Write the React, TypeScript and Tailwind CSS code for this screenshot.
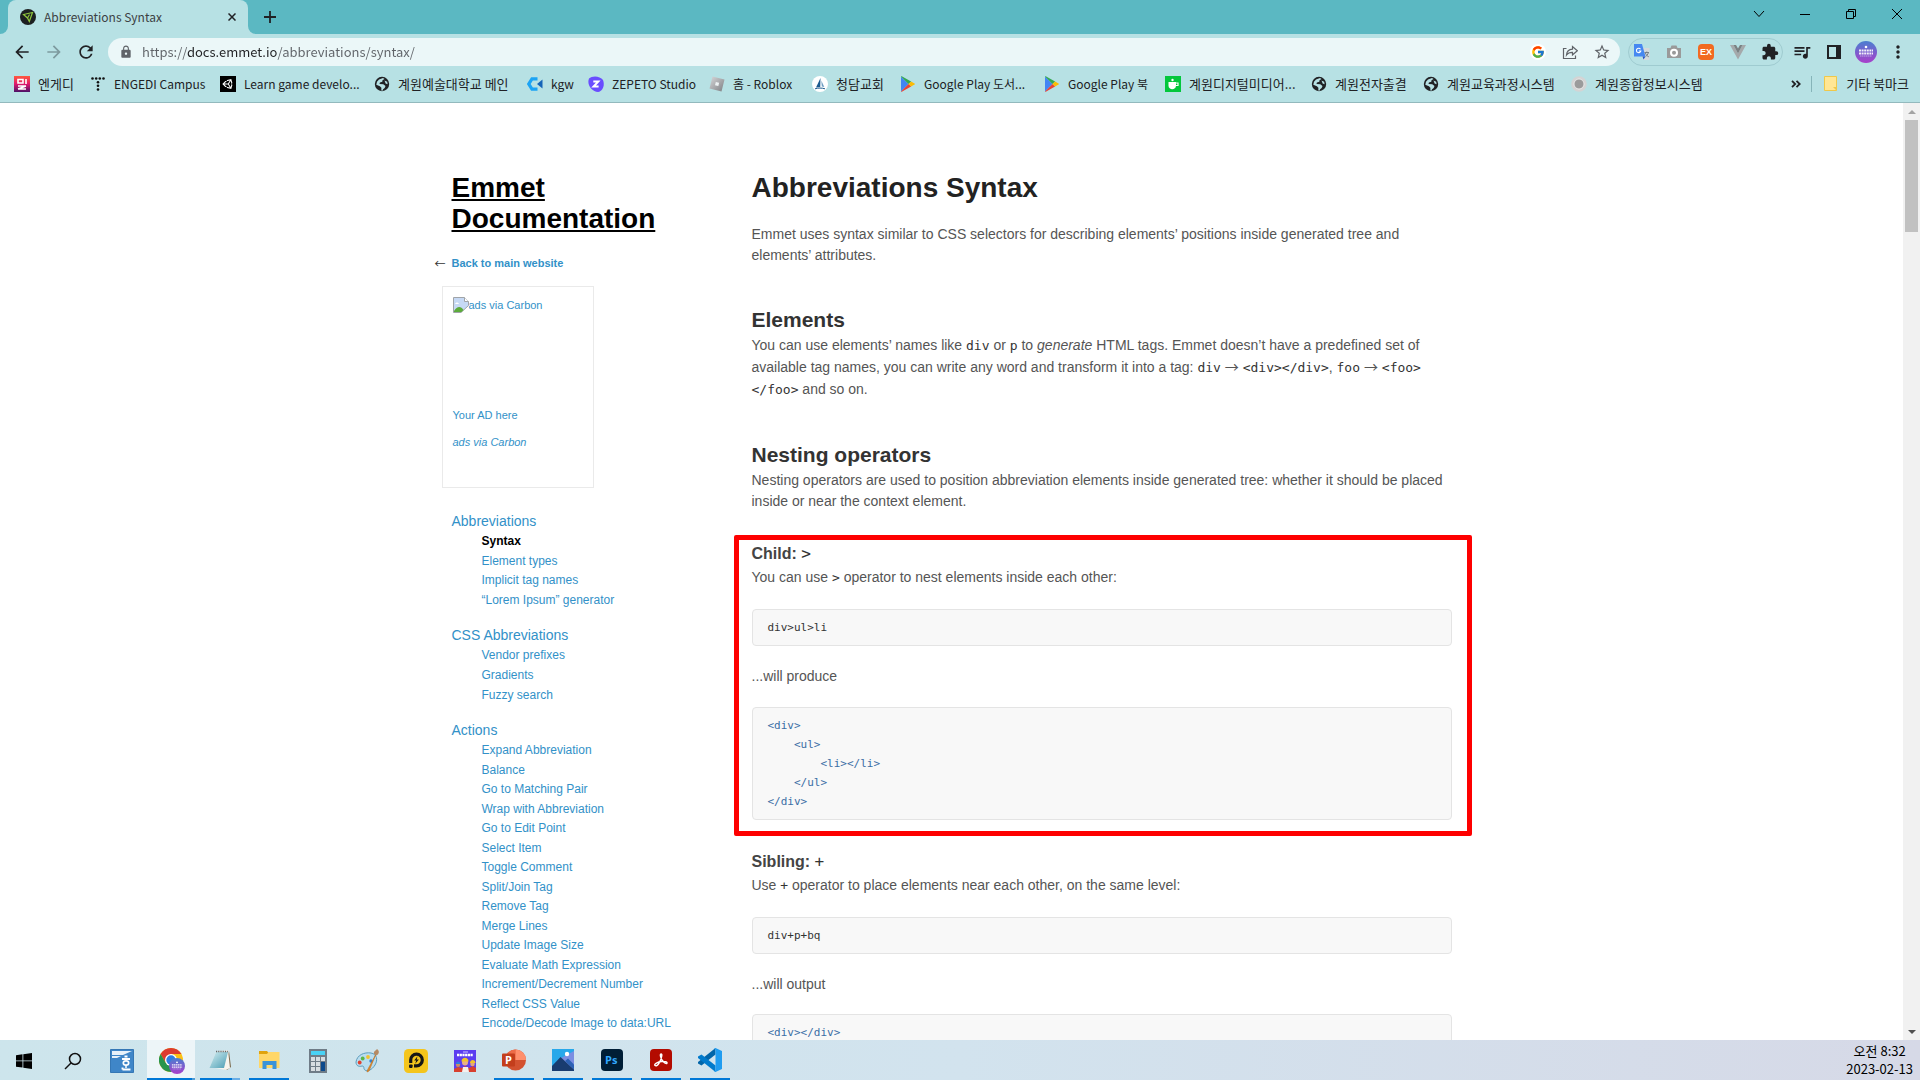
import type { ReactNode } from "react";
import { FcGoogle } from "react-icons/fc";
import { FaUnity } from "react-icons/fa";
import {
  MdArrowBack,
  MdArrowForward,
  MdExtension,
  MdLock,
  MdMoreVert,
  MdQueueMusic,
  MdRefresh,
  MdStarOutline,
} from "react-icons/md";

type Bookmark = {
  label: string;
  icon: ReactNode;
  width: string;
};

type NavGroup = {
  title: string;
  height: string;
  items: string[];
};

type TaskItem = {
  label: string;
  icon: ReactNode;
  state?: "open" | "stacked" | "active";
};

function Globe() {
  return (
    <svg viewBox="0 0 16 16" className="size-4">
      <circle cx="8" cy="8" r="7.2" fill="#202124" />
      <path d="M5 3.5l4-1.6 1.5 1.2-2 1.1-.2 1.6-2.4.6-.4 1.6 3.8.3 2.2 1.8-.8 2-1.6 1.2-.6 1.5-1.2-.3.1-2.7-1.5-1.6L2.3 8.800 3 5.700z" fill="#b7e1e4" />
      <path d="M10.5 4.500l2.700 1.200.4 2.500-2-.8z" fill="#b7e1e4" />
    </svg>
  );
}

function PlayLogo() {
  return (
    <svg viewBox="0 0 16 16" className="size-4">
      <path d="M1 .6v14.800L8.500 8z" fill="#4285f4" />
      <path d="M1 .6L8.500 8l2.600-2.500L2.200.4C1.700.1 1.200.2 1 .6z" fill="#34a853" />
      <path d="M1 15.400L8.500 8l2.600 2.500-8.900 5.100c-.5.3-1 .2-1.200-.2z" fill="#ea4335" />
      <path d="M11.100 5.500L8.500 8l2.600 2.500 3.400-1.900c.6-.4.6-.9 0-1.200z" fill="#fbbc04" />
    </svg>
  );
}

function ProfileBadge({ className }: { className: string }) {
  return (
    <svg viewBox="0 0 22 22" className={className}>
      <defs>
        <linearGradient id="badge" x1="0" y1="0" x2="0" y2="1">
          <stop offset="0" stopColor="#4a7fd0" />
          <stop offset="1" stopColor="#a93fcb" />
        </linearGradient>
      </defs>
      <circle cx="11" cy="11" r="11" fill="url(#badge)" />
      <circle cx="11" cy="6" r="1.3" fill="#fff" />
      <path d="M4 9.500h14M4 12.500h14" stroke="#fff" strokeWidth="1.800" strokeDasharray="2 .6" opacity=".9" />
      <path d="M5 15h12" stroke="#fff" strokeWidth=".8" strokeDasharray="1.500 .5" opacity=".6" />
    </svg>
  );
}

const bookmarks: Bookmark[] = [
  {
    label: "엔게디",
    width: "w-[60px] text-[13px]",
    icon: (
      <svg viewBox="0 0 16 16" className="size-4">
        <defs>
          <linearGradient id="engedi" x1="0" y1="0" x2="0" y2="1">
            <stop offset="0" stopColor="#ff5a3c" />
            <stop offset=".5" stopColor="#e0176c" />
            <stop offset="1" stopColor="#4b1268" />
          </linearGradient>
        </defs>
        <path d="M0 0h16v16H0z" fill="url(#engedi)" />
        <path d="M4 3.500h5v3.500H4zM12 3v5M4 10h8M4 13h8M4 13l8-3" fill="none" stroke="#fff" strokeWidth="1.600" />
      </svg>
    ),
  },
  {
    label: "ENGEDI Campus",
    width: "w-[114px] text-xs",
    icon: (
      <svg viewBox="0 0 16 16" className="size-4" fill="#111">
        <circle cx="2.500" cy="2.500" r="1.300" />
        <circle cx="6.200" cy="2.500" r="1.300" />
        <circle cx="9.800" cy="2.500" r="1.300" />
        <circle cx="13.500" cy="2.500" r="1.300" />
        <circle cx="8" cy="6.200" r="1.300" />
        <circle cx="8" cy="9.800" r="1.300" />
        <circle cx="8" cy="13.500" r="1.300" />
      </svg>
    ),
  },
  {
    label: "Learn game develo...",
    width: "w-[138px] text-xs",
    icon: (
      <span className="flex size-4 items-center justify-center bg-black">
        <FaUnity className="size-3 text-white" />
      </span>
    ),
  },
  { label: "계원예술대학교 메인", width: "w-[137px] text-[13px]", icon: <Globe /> },
  {
    label: "kgw",
    width: "w-[45px] text-xs",
    icon: (
      <svg viewBox="0 0 16 16" className="size-4" fill="none">
        <path d="M10.500 2.800H5L1.800 8 5 13.200h5.500" stroke="#1ca4f4" strokeWidth="3.200" />
        <path d="M15.500 3.500v9L10 8z" fill="#1464b8" />
      </svg>
    ),
  },
  {
    label: "ZEPETO Studio",
    width: "w-[105px] text-xs",
    icon: (
      <svg viewBox="0 0 16 16" className="size-4">
        <path d="M1 2.500C4-.6 12-.4 15 4c2 5 0 11-5 12C4 15.500-1.500 9 1 2.500z" fill="#6a4dff" />
        <path d="M5.300 5.500h5L5.600 10.500h5" fill="none" stroke="#fff" strokeWidth="2" />
      </svg>
    ),
  },
  {
    label: "홈 - Roblox",
    width: "w-[87px] text-xs",
    icon: (
      <svg viewBox="0 0 16 16" className="size-4">
        <defs>
          <linearGradient id="roblox" x1="0" y1="0" x2="1" y2="1">
            <stop offset="0" stopColor="#d8d8da" />
            <stop offset="1" stopColor="#7d7f83" />
          </linearGradient>
        </defs>
        <path d="M3.500.5l12 3-3 12-12-3z" fill="url(#roblox)" />
        <path d="M6.800 5.900l3.300.8-.8 3.300-3.300-.8z" fill="#eef3f4" />
      </svg>
    ),
  },
  {
    label: "청담교회",
    width: "w-[72px] text-[13px]",
    icon: (
      <svg viewBox="0 0 16 16" className="size-4">
        <circle cx="8" cy="8" r="8" fill="#fff" />
        <path d="M8.500 2L8.200 11 4 11.500z" fill="#1d5b8f" />
        <path d="M9.300 4.500l3 6.500-2.500-.5z" fill="#6f9ec2" />
        <path d="M3 12.800c3-1 7-1 10 0" fill="none" stroke="#1d5b8f" />
      </svg>
    ),
  },
  { label: "Google Play 도서...", width: "w-[128px] text-xs", icon: <PlayLogo /> },
  { label: "Google Play 북", width: "w-[105px] text-xs", icon: <PlayLogo /> },
  {
    label: "계원디지털미디어...",
    width: "w-[130px] text-[13px]",
    icon: (
      <svg viewBox="0 0 16 16" className="size-4">
        <path d="M0 0h16v16H0z" fill="#03c73c" />
        <path d="M3.500 6h7.500v3.500c0 5-7.500 5-7.500 0z" fill="#fff" />
        <path d="M11 7h2v2.500h-2.300" fill="none" stroke="#fff" strokeWidth="1.200" />
        <circle cx="7.500" cy="4" r="1.200" fill="#fff" />
      </svg>
    ),
  },
  { label: "계원전자출결", width: "w-[96px] text-[13px]", icon: <Globe /> },
  { label: "계원교육과정시스템", width: "w-[132px] text-[13px]", icon: <Globe /> },
  {
    label: "계원종합정보시스템",
    width: "w-[132px] text-[13px]",
    icon: (
      <svg viewBox="0 0 16 16" className="size-4">
        <circle cx="8" cy="8" r="7.800" fill="#d4d4d4" />
        <circle cx="8" cy="8" r="5" fill="#9b9b9b" stroke="#f1f1f1" strokeWidth=".8" />
      </svg>
    ),
  },
];

const navGroups: NavGroup[] = [
  {
    title: "Abbreviations",
    height: "min-h-[78px]",
    items: ["Syntax", "Element types", "Implicit tag names", "“Lorem Ipsum” generator"],
  },
  {
    title: "CSS Abbreviations",
    height: "min-h-[59px]",
    items: ["Vendor prefixes", "Gradients", "Fuzzy search"],
  },
  {
    title: "Actions",
    height: "min-h-[292px]",
    items: [
      "Expand Abbreviation",
      "Balance",
      "Go to Matching Pair",
      "Wrap with Abbreviation",
      "Go to Edit Point",
      "Select Item",
      "Toggle Comment",
      "Split/Join Tag",
      "Remove Tag",
      "Merge Lines",
      "Update Image Size",
      "Evaluate Math Expression",
      "Increment/Decrement Number",
      "Reflect CSS Value",
      "Encode/Decode Image to data:URL",
    ],
  },
];

const taskItems: TaskItem[] = [
  {
    label: "Start",
    icon: (
      <svg viewBox="0 0 16 16" className="size-4" fill="#000">
        <path d="M0 2.200L6.500 1.300v6.200H0zM7.300 1.200L16 0v7.500H7.300zM0 8.300h6.500v6.300L0 13.700zM7.300 8.300H16V16l-8.700-1.300z" />
      </svg>
    ),
  },
  {
    label: "Search",
    icon: (
      <svg viewBox="0 0 18 18" className="size-[18px]" fill="none" stroke="#111" strokeWidth="1.500">
        <circle cx="11" cy="7" r="5.500" />
        <path d="M7 11l-6 6" />
      </svg>
    ),
  },
  {
    label: "Hangul",
    icon: (
      <svg viewBox="0 0 24 24" className="size-6">
        <path d="M.5.500h23v23H.5z" fill="#3f86c8" stroke="#3577b5" />
        <path d="M2 2h20L13 6H2zM2 7h9L7 9H2z" fill="#e8f2fa" />
        <path d="M14.500 7.500h3M12 10h8M12.500 20.500v-2M12.500 20.500h8" stroke="#fff" strokeWidth="1.900" />
        <ellipse cx="16" cy="14" rx="2.700" ry="2.100" fill="none" stroke="#fff" strokeWidth="1.700" />
        <path d="M16 16v3" stroke="#fff" strokeWidth="1.500" />
      </svg>
    ),
  },
  {
    label: "Chrome",
    state: "active",
    icon: (
      <span className="relative flex size-6">
        <svg viewBox="0 0 24 24" className="size-6">
          <circle cx="12" cy="12" r="12" fill="#fbc116" />
          <path d="M12 0A12 12 0 0 0 1.600 6l5.200 9L12 6h10.400A12 12 0 0 0 12 0z" fill="#dc3b2f" />
          <path d="M1.600 6A12 12 0 0 0 12 24l5.200-9H6.800z" fill="#27944c" />
          <circle cx="12" cy="12" r="6" fill="#fff" />
          <circle cx="12" cy="12" r="4.700" fill="#2f7de1" />
        </svg>
        <ProfileBadge className="absolute -right-[2px] -bottom-[2px] size-4" />
      </span>
    ),
  },
  {
    label: "Notepad",
    state: "stacked",
    icon: (
      <svg viewBox="0 0 24 24" className="size-6">
        <defs>
          <linearGradient id="pad" x1="0" y1="0" x2="1" y2="1">
            <stop offset="0" stopColor="#d3eef2" />
            <stop offset="1" stopColor="#4b9db3" />
          </linearGradient>
        </defs>
        <path d="M21 3l2 16-4 3-3-1z" fill="#7b6a4e" />
        <path d="M8 4l12-2 2 18-4 2-16-3z" fill="#f6f5ee" />
        <path d="M8 4h12l-4 16H1.500z" fill="url(#pad)" />
        <path d="M8 3.500h12.500" stroke="#666" strokeWidth="1.400" strokeDasharray="1 .8" />
      </svg>
    ),
  },
  {
    label: "File Explorer",
    state: "open",
    icon: (
      <svg viewBox="0 0 24 24" className="size-6">
        <path d="M2 3h8l2 2.500h9.500V9H2z" fill="#e0a30c" />
        <path d="M2 6h8l1.500-2h11v16H2z" fill="#ffd768" />
        <path d="M5.500 21v-8h14v8h-4v-4h-6v4z" fill="#3a93d8" />
      </svg>
    ),
  },
  {
    label: "Calculator",
    icon: (
      <svg viewBox="0 0 24 24" className="size-6">
        <path d="M3 0h18v24H3z" fill="#6f7c87" />
        <path d="M5 2h14v4H5z" fill="#49d2f5" />
        <path d="M5 8h4v4H5zM10 8h4v4h-4zM15 8h4v4h-4zM5 13h4v4H5zM10 13h4v4h-4zM5 18h4v4H5zM10 18h4v4h-4z" fill="#d7dde1" />
        <path d="M15 13h4v9h-4z" fill="#0c4a8c" />
      </svg>
    ),
  },
  {
    label: "Paint",
    icon: (
      <svg viewBox="0 0 24 24" className="size-6">
        <path d="M1 13C2 6 9 3 16 4c6 1 7 7 4 12-3 5-8 7-10 5-2-1 0-4-3-4-3 1-6 0-6-4z" fill="#b9ddef" stroke="#5d9dbd" />
        <circle cx="4.700" cy="13.500" r="1.900" fill="#e0402f" />
        <circle cx="7.700" cy="9.500" r="1.900" fill="#5bb548" />
        <circle cx="13" cy="8" r="1.900" fill="#f2c230" />
        <circle cx="16" cy="12" r="1.700" fill="#3680d0" />
        <path d="M21 5l-7 17-2 1 .5-2z" fill="#e08a2c" stroke="#c1701c" strokeWidth=".6" />
        <path d="M19 5c-1-3 2-3 3-5 3 2 2 5-.5 6.500z" fill="#b58a64" />
      </svg>
    ),
  },
  {
    label: "PotPlayer",
    icon: (
      <svg viewBox="0 0 24 24" className="size-6">
        <rect width="24" height="24" rx="4.500" fill="#f4c51c" />
        <path d="M6.700 14V11a5.800 5.800 0 1 1 5.800 5.800H10" fill="none" stroke="#161616" strokeWidth="3.200" />
        <rect x="5" y="15.500" width="3.600" height="3.400" rx=".8" fill="#161616" />
        <path d="M13.500 7.200l-3.300 4.300h2l-1 3.300 3.700-4.400h-2.200z" fill="#161616" />
      </svg>
    ),
  },
  {
    label: "Game",
    icon: (
      <svg viewBox="0 0 24 24" className="size-6">
        <path d="M1 1h22v22H1z" fill="#5b3df0" />
        <path d="M4 6h16" stroke="#fff" strokeWidth="2.400" strokeDasharray="2.200 .5" />
        <path d="M10 3h5" stroke="#cfc6ff" />
        <path d="M1 23v-3l4-2 4 1 3-2 4 2 4-2 3 2v4z" fill="#d8402f" />
        <path d="M9 23l1-5h5l1 5z" fill="#f6f1ee" />
        <circle cx="12" cy="13.500" r="3" fill="#e9b088" />
        <circle cx="5" cy="15.800" r="2.200" fill="#c98a65" />
        <circle cx="19.500" cy="15" r="2.300" fill="#e3a67e" />
        <path d="M8.500 12.500c0-5 7-5 7 0zM17 14c0-4 5.500-4 5.500 0z" fill="#f3c32a" />
        <path d="M2.800 15c0-3.500 4.500-3.500 4.500 0z" fill="#2f7be0" />
      </svg>
    ),
  },
  {
    label: "PowerPoint",
    state: "open",
    icon: (
      <svg viewBox="0 0 24 24" className="size-6">
        <circle cx="13.500" cy="12" r="10.500" fill="#d35230" />
        <path d="M13.500 1.500A10.500 10.500 0 0 0 3 12h10.500z" fill="#ed6c47" />
        <path d="M13.500 1.500A10.500 10.500 0 0 1 24 12H13.500z" fill="#ff8f6b" />
        <rect x="0" y="5.500" width="13" height="13" rx="1" fill="#c43e1c" />
        <text x="3" y="16" fill="#fff" className="font-['Open_Sans'] text-[11px] font-bold">P</text>
      </svg>
    ),
  },
  {
    label: "Photos",
    state: "open",
    icon: (
      <svg viewBox="0 0 24 24" className="size-6">
        <path d="M1 1h22v22H1z" fill="#28a8ea" />
        <path d="M23 3v20L10 10z" fill="#7b8fe2" />
        <path d="M1 18l8.500-9L23 21.500V23H1z" fill="#193c70" />
        <path d="M14 13l3-2.500 6 6v5z" fill="#2d62b5" />
        <circle cx="16" cy="6" r="2.200" fill="#fff" />
      </svg>
    ),
  },
  {
    label: "Photoshop",
    state: "open",
    icon: (
      <svg viewBox="0 0 24 24" className="size-6">
        <rect x="1" y="1" width="22" height="22" rx="4" fill="#001e36" />
        <text x="5" y="16" fill="#31a8ff" className="font-['Open_Sans'] text-[11px] font-bold">Ps</text>
      </svg>
    ),
  },
  {
    label: "Acrobat",
    state: "open",
    icon: (
      <svg viewBox="0 0 24 24" className="size-6">
        <rect x="1" y="1" width="22" height="22" rx="4" fill="#b30b00" />
        <path d="M6 17.500c-1.500-1.500 3-3.600 6.500-4 3-.4 6 .2 5.500 1.600-.8 1.700-5.800-2-6.600-7.300-.3-2.600 1.700-2.600 1.400 0C12.500 11.500 8.500 19.500 6 17.500z" fill="none" stroke="#fff" strokeWidth="1.400" />
      </svg>
    ),
  },
  {
    label: "Visual Studio Code",
    state: "open",
    icon: (
      <svg viewBox="0 0 24 24" className="size-6">
        <path d="M17.500 0v6.500L3.500 17.500 0 15.500v-1.500z" fill="#0065a9" />
        <path d="M17.500 24v-6.500L3.500 6.500 0 8.500v1.500z" fill="#007acc" />
        <path d="M17.500 0L24 3v18l-6.500 3-1.500-1 1.500-.5V1.500L16 1z" fill="#1f9cf0" />
      </svg>
    ),
  },
];

function InlineCode({ children, large }: { children: ReactNode; large?: boolean }) {
  return (
    <code
      className={`font-['DejaVu_Sans_Mono',monospace] leading-none font-normal text-[#333] ${
        large ? "text-base" : "text-[13px]"
      }`}
    >
      {children}
    </code>
  );
}

function Arrow({ children }: { children: string }) {
  return <span className="font-['Noto_Sans_CJK_KR',sans-serif] leading-none">{children}</span>;
}

function CodeBlock({ children, markup }: { children: string; markup?: boolean }) {
  return (
    <pre
      className={`rounded border border-[#e4e4e4] bg-[#f8f8f8] px-[15px] py-2 font-['DejaVu_Sans_Mono',monospace] text-[11px] leading-[19px] ${
        markup ? "text-[#3b6ea5]" : "text-[#333]"
      }`}
    >
      {children}
    </pre>
  );
}

function TabStrip() {
  return (
    <div className="flex h-[34px] items-stretch bg-[#5bb8c2] text-black">
      <div className="flex w-2 items-end bg-[#b7e1e4]">
        <span className="h-full w-2 rounded-br-lg bg-[#5bb8c2]" />
      </div>
      <div className="flex w-[240px] items-center gap-2 rounded-t-lg bg-[#b7e1e4] pr-2 pl-3 text-[#3c4043]">
        <svg viewBox="0 0 16 16" className="size-4">
          <circle cx="8" cy="8" r="8" fill="#1d2021" />
          <path d="M3.500 5.500l9-2-3.200 9L7.500 9z" fill="none" stroke="#8fc63d" strokeWidth="1.200" />
          <path d="M7.500 9l2-3.500" stroke="#8fc63d" strokeWidth="1.200" />
        </svg>
        <span className="flex-1 text-xs">Abbreviations Syntax</span>
        <button aria-label="Close tab" className="flex size-4 items-center justify-center">
          <svg viewBox="0 0 8 8" className="size-2" stroke="#202124" strokeWidth="1.500">
            <path d="M.5.500l7 7M7.500.500l-7 7" />
          </svg>
        </button>
      </div>
      <div className="flex w-2 bg-[#b7e1e4]">
        <span className="h-full w-2 rounded-bl-lg bg-[#5bb8c2]" />
      </div>
      <button aria-label="New tab" className="flex w-7 items-center justify-center">
        <svg viewBox="0 0 12 12" className="size-3" stroke="#202124" strokeWidth="1.800">
          <path d="M6 0v12M0 6h12" />
        </svg>
      </button>
      <div className="ml-auto flex h-7">
        <button aria-label="Search tabs" className="flex w-[46px] items-center justify-center">
          <svg viewBox="0 0 12 8" className="h-2 w-3" fill="none" stroke="#000">
            <path d="M1 1l5 5.500L11 1" />
          </svg>
        </button>
        <button aria-label="Minimize" className="flex w-[46px] items-center justify-center">
          <span className="h-px w-[10px] bg-black" />
        </button>
        <button aria-label="Restore" className="flex w-[46px] items-center justify-center">
          <svg viewBox="0 0 10 10" className="size-[10px]" fill="none" stroke="#000">
            <path d="M.5 2.500h7v7h-7zM2.500 2.500v-2h7v7h-2" />
          </svg>
        </button>
        <button aria-label="Close" className="flex w-[46px] items-center justify-center">
          <svg viewBox="0 0 10 10" className="size-[10px]" stroke="#000">
            <path d="M0 0l10 10M10 0L0 10" />
          </svg>
        </button>
      </div>
    </div>
  );
}

function Toolbar() {
  return (
    <div className="flex h-9 items-center px-[6px]">
      <div className="flex w-[102px] text-[#202124]">
        <button aria-label="Back" className="flex size-8 items-center justify-center">
          <MdArrowBack className="size-5" />
        </button>
        <button aria-label="Forward" className="flex size-8 items-center justify-center text-[#7d9a9e]">
          <MdArrowForward className="size-5" />
        </button>
        <button aria-label="Reload" className="flex size-8 items-center justify-center">
          <MdRefresh className="size-5" />
        </button>
      </div>
      <div className="flex h-7 flex-1 items-center rounded-full bg-[#ebf7f8] pr-[2px] pl-[11px] text-[#5f6368]">
        <MdLock className="size-[14px]" />
        {/* the gradient darkens the host part of the address */}
        <input
          type="text"
          aria-label="Address"
          defaultValue="https://docs.emmet.io/abbreviations/syntax/"
          className="ml-[9px] min-w-0 flex-1 bg-[linear-gradient(90deg,#5f6368_45px,#202124_45px,#202124_136px,#5f6368_136px)] bg-clip-text text-[13px] text-transparent outline-none"
        />
        <button aria-label="Google" className="flex size-8 items-center justify-center">
          <span className="flex size-4 items-center justify-center rounded-full bg-white">
            <FcGoogle className="size-[14px]" />
          </span>
        </button>
        <button aria-label="Share" className="flex size-8 items-center justify-center">
          <svg viewBox="0 0 16 16" className="size-4" fill="none" stroke="#5f6368" strokeWidth="1.200">
            <path d="M4.500 4.500h-3v10h12v-3" />
            <path d="M4.500 11c.3-4 2.500-5.700 6-5.800V2.500l4.800 4.300-4.800 4.200V8.300c-2.800-.1-4.600.7-6 2.700z" />
          </svg>
        </button>
        <button aria-label="Bookmark this page" className="flex size-8 items-center justify-center">
          <MdStarOutline className="size-[18px]" />
        </button>
      </div>
      <div className="ml-2 flex h-7 items-center rounded-full border border-[#9fcbd0] px-[3px]">
        <button aria-label="Translate" className="flex w-8 justify-start pl-[2px]">
          <svg viewBox="0 0 16 16" className="size-4">
            <path d="M6 4h9.500v12H9z" fill="#d5dadd" />
            <path d="M0 0h8l3.500 12.500H0z" fill="#4688f1" />
            <path d="M8.500 12.500h3L9.500 15.500z" fill="#2555c4" />
            <path d="M6.500 5.200a2.200 2.200 0 1 0 .3 1.800H4.800" fill="none" stroke="#fff" strokeWidth="1.100" />
            <path d="M10.500 8.500h4.500M12.800 7.500v1M11.300 9c.8 2 2 3 3.500 3.800M14.300 9c-.5 1.500-1.500 2.700-2.600 3.500" fill="none" stroke="#6d7880" strokeWidth=".9" />
          </svg>
        </button>
        <button aria-label="Capture" className="flex w-8 justify-start pl-[2px]">
          <svg viewBox="0 0 16 16" className="size-4">
            <path d="M1 4h3.500l1-2.500h5l1 2.500H15v10H1z" fill="#9a9a9a" />
            <circle cx="8" cy="8.700" r="3" fill="none" stroke="#fff" strokeWidth="2" />
          </svg>
        </button>
        <button aria-label="EX" className="flex w-8 justify-start pl-[2px]">
          <span className="flex size-4 items-center justify-center rounded bg-[#f26a21] font-['Liberation_Sans',sans-serif] text-[9px] leading-none font-bold text-white">
            EX
          </span>
        </button>
        <button aria-label="Vue" className="flex w-8 justify-start pl-[2px]">
          <svg viewBox="0 0 16 16" className="size-4">
            <path d="M0 1h3.500L8 9.500 12.500 1H16L8 15.500z" fill="#a5a9ab" />
            <path d="M3.500 1H6l2 3.500L10 1h2.500L8 9.500z" fill="#7b8183" />
          </svg>
        </button>
        <button aria-label="Extensions" className="flex w-[19px] justify-end">
          <MdExtension className="size-[18px] text-[#202124]" />
        </button>
      </div>
      <div className="ml-[3px] flex text-[#202124]">
        <button aria-label="Media" className="flex size-8 items-center justify-center">
          <MdQueueMusic className="size-5" />
        </button>
        <button aria-label="Side panel" className="flex size-8 items-center justify-center">
          <svg viewBox="0 0 14 14" className="size-[14px]">
            <path d="M1 1h12v12H1z" fill="none" stroke="#202124" strokeWidth="2" />
            <path d="M9 1h4v12H9z" fill="#202124" />
          </svg>
        </button>
        <button aria-label="Profile" className="flex size-8 items-center justify-center">
          <ProfileBadge className="size-[22px]" />
        </button>
        <button aria-label="Menu" className="flex size-8 items-center justify-center">
          <MdMoreVert className="size-5" />
        </button>
      </div>
    </div>
  );
}

function BookmarkBar() {
  return (
    <div className="flex h-[33px] items-center gap-4 border-b border-[#93b9bd] pr-[11px] pb-[5px] pl-[14px] leading-5 whitespace-nowrap text-[#202124]">
      {bookmarks.map((mark) => (
        <a key={mark.label} href="#" className={`flex shrink-0 items-center gap-2 leading-5 ${mark.width}`}>
          <span className="size-4 shrink-0">{mark.icon}</span>
          <span>{mark.label}</span>
        </a>
      ))}
      <div className="ml-auto flex items-center">
        <button aria-label="More bookmarks" className="mr-[10px]">
          <svg viewBox="0 0 10 8" className="h-2 w-[10px]" fill="none" stroke="#202124" strokeWidth="1.800">
            <path d="M1 .8L4.200 4 1 7.200M5.500.8L8.700 4 5.500 7.200" />
          </svg>
        </button>
        <span className="mr-3 h-4 w-px bg-[#86b4b9]" />
        <a href="#" className="flex items-center gap-[9px] text-[13px] leading-5">
          <svg viewBox="0 0 13 15" className="h-[15px] w-[13px]">
            <path d="M.5.500h12v14H.5z" fill="#ffe694" stroke="#efc84a" />
            <path d="M9 11h3.500v3.500z" fill="#efc84a" />
          </svg>
          기타 북마크
        </a>
      </div>
    </div>
  );
}

function Sidebar() {
  return (
    <aside className="w-[300px] shrink-0">
      <a href="#" className="block w-[220px] text-[28px] leading-[31px] font-bold text-black underline">
        Emmet Documentation
      </a>
      <div className="mt-5 -ml-[17px] flex text-[11px] leading-[18px] font-bold">
        <span className="w-[17px] font-['Noto_Sans_CJK_KR',sans-serif] font-normal text-[#333]">←</span>
        <a href="#" className="text-[#3291c8]">
          Back to main website
        </a>
      </div>
      <div className="mt-[14px] -ml-[10px] w-[152px] border border-[#eaeaea] px-[10px] pt-[10px] pb-9 text-[11px] leading-[18px] text-[#3291c8]">
        <a href="#" className="flex h-[100px] leading-4">
          <svg viewBox="0 0 16 16" className="size-4 shrink-0">
            <path d="M.5.500h11l4 4v4L8 15.500H.5z" fill="#c6d9f5" stroke="#a0a4a8" />
            <path d="M11.500.500v4h4" fill="#fff" stroke="#a0a4a8" />
            <path d="M2 7c1-2 3-2 4 0z" fill="#fff" />
            <path d="M1 15v-1c3-5 7-5 9.500-1L8.500 15z" fill="#5cab3b" />
          </svg>
          ads via Carbon
        </a>
        <a href="#" className="mt-[9px] block">
          Your AD here
        </a>
        <a href="#" className="mt-[9px] block italic">
          ads via Carbon
        </a>
      </div>
      <nav className="mt-[22px] flex flex-col gap-[14px] text-[#3291c8]">
        {navGroups.map((group) => (
          <div key={group.title}>
            <a href="#" className="block text-sm leading-[22px]">
              {group.title}
            </a>
            <ul className={`flex flex-col justify-between pl-[30px] text-xs leading-[19px] ${group.height}`}>
              {group.items.map((item) => (
                <li key={item}>
                  {item === "Syntax" ? (
                    <strong className="text-black">{item}</strong>
                  ) : (
                    <a href="#">{item}</a>
                  )}
                </li>
              ))}
            </ul>
          </div>
        ))}
      </nav>
    </aside>
  );
}

function Article() {
  return (
    <article className="min-w-0 flex-1 text-sm leading-[22px] text-[#555]">
      <h1 className="text-[28px] leading-[31px] font-bold text-[#222]">Abbreviations Syntax</h1>
      <p className="mt-[21px] leading-[21px]">
        Emmet uses syntax similar to CSS selectors for describing elements’ positions inside generated tree and
        elements’ attributes.
      </p>

      <h2 className="mt-[41px] text-[21px] leading-[25px] font-bold text-[#333]">Elements</h2>
      <p className="mt-[2px] leading-[22px]">
        You can use elements’ names like <InlineCode>div</InlineCode> or <InlineCode>p</InlineCode> to{" "}
        <em>generate</em> HTML tags. Emmet doesn’t have a predefined set of available tag names, you can write any
        word and transform it into a tag: <InlineCode>div</InlineCode> <Arrow>→</Arrow>{" "}
        <InlineCode>{"<div></div>"}</InlineCode>, <InlineCode>foo</InlineCode> <Arrow>→</Arrow>{" "}
        <InlineCode>
          {"<foo>"}
          <wbr />
          {"</foo>"}
        </InlineCode>{" "}
        and so on.
      </p>

      <h2 className="mt-[42px] text-[21px] leading-[25px] font-bold text-[#333]">Nesting operators</h2>
      <p className="mt-[3px] leading-[21px]">
        Nesting operators are used to position abbreviation elements inside generated tree: whether it should be
        placed inside or near the context element.
      </p>

      <section className="relative mt-8">
        <h3 className="text-base leading-5 font-bold text-[#444]">
          Child: <InlineCode large>{">"}</InlineCode>
        </h3>
        <p className="mt-[2px] leading-[22px]">
          You can use <InlineCode>{">"}</InlineCode> operator to nest elements inside each other:
        </p>
        <div className="mt-[21px] flex flex-col gap-5">
          <CodeBlock>{"div>ul>li"}</CodeBlock>
          <p className="leading-[21px]">...will produce</p>
          <CodeBlock markup>
            {"<div>\n    <ul>\n        <li></li>\n    </ul>\n</div>"}
          </CodeBlock>
        </div>
        <div className="pointer-events-none absolute -top-[9px] -right-5 -bottom-4 -left-[18px] rounded-xs border-5 border-[#fe0000]" />
      </section>

      <section className="mt-8">
        <h3 className="text-base leading-5 font-bold text-[#444]">
          Sibling: <InlineCode large>+</InlineCode>
        </h3>
        <p className="mt-[2px] leading-[22px]">
          Use <InlineCode>+</InlineCode> operator to place elements near each other, on the same level:
        </p>
        <div className="mt-[21px] flex flex-col gap-5">
          <CodeBlock>div+p+bq</CodeBlock>
          <p className="leading-5">...will output</p>
          <CodeBlock markup>{"<div></div>"}</CodeBlock>
        </div>
      </section>
    </article>
  );
}

function Scrollbar() {
  return (
    <div className="flex w-[17px] shrink-0 flex-col items-center bg-[#f1f1f1]">
      <button aria-label="Scroll up" className="flex h-[17px] w-full items-center justify-center">
        <svg viewBox="0 0 8 4" className="h-1 w-2" fill="#a3a3a3">
          <path d="M4 0l4 4H0z" />
        </svg>
      </button>
      <span className="h-[112px] w-[13px] bg-[#c1c1c1]" />
      <button aria-label="Scroll down" className="mt-auto flex h-[17px] w-full items-center justify-center">
        <svg viewBox="0 0 8 4" className="h-1 w-2" fill="#505050">
          <path d="M4 4l4-4H0z" />
        </svg>
      </button>
    </div>
  );
}

function Taskbar() {
  return (
    <footer className="flex h-10 shrink-0 items-stretch justify-between bg-linear-to-r from-[#cde5ec] via-[#d2e3ee] to-[#d6d9e7] pr-[7px]">
      <div className="flex gap-px">
        {taskItems.map((item) => (
          <button
            key={item.label}
            aria-label={item.label}
            className={`flex w-12 flex-col items-center justify-between ${
              item.state === "active" ? "bg-[#edf5f8]" : ""
            }`}
          >
            <span className="flex flex-1 items-center pt-[2px]">{item.icon}</span>
            {item.state === "open" && <span className="h-[2px] w-10 bg-[#0078d7]" />}
            {item.state === "stacked" && (
              <span className="flex h-[2px] w-10">
                <span className="flex-1 bg-[#0078d7]" />
                <span className="w-2 bg-[#69aee6]" />
              </span>
            )}
            {item.state === "active" && (
              <span className="flex h-[2px] w-full">
                <span className="flex-1 bg-[#0078d7]" />
                <span className="w-[3px] bg-[#4f9bd5]" />
              </span>
            )}
          </button>
        ))}
      </div>
      <div className="flex flex-col justify-center text-center text-[13px] leading-[18px] text-black">
        <span>오전 8:32</span>
        <span>2023-02-13</span>
      </div>
    </footer>
  );
}

export default function App() {
  return (
    <div className="flex h-screen flex-col overflow-hidden bg-white font-['Noto_Sans_CJK_KR',sans-serif]">
      <header className="shrink-0 bg-[#b7e1e4]">
        <TabStrip />
        <Toolbar />
        <BookmarkBar />
      </header>
      <div className="flex min-h-0 flex-1">
        <main className="min-w-0 flex-1 overflow-hidden font-['Liberation_Sans',Arial,sans-serif]">
          <div className="mx-auto flex max-w-[1000px] pt-[69px]">
            <Sidebar />
            <Article />
          </div>
        </main>
        <Scrollbar />
      </div>
      <Taskbar />
    </div>
  );
}
